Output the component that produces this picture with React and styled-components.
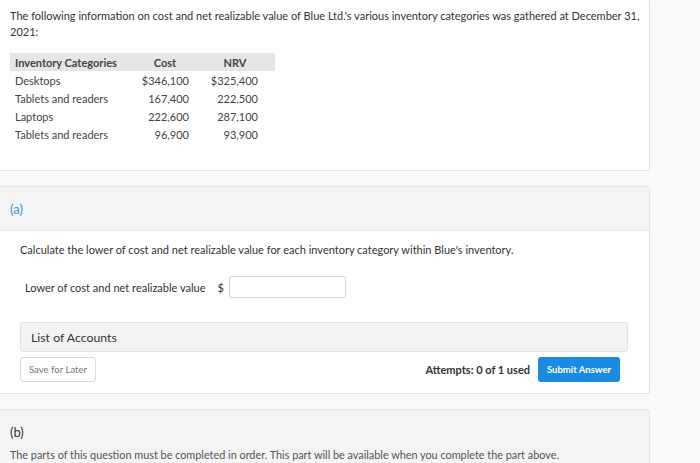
import React from 'react';
import styled, { createGlobalStyle } from 'styled-components';

const GlobalStyle = createGlobalStyle`
  html, body {
    margin: 0;
    padding: 0;
    background: #fafafa;
    font-family: Lato, "Open Sans", sans-serif;
    color: #333;
  }
`;

const Page = styled.div`
  width: 650px;
  display: flex;
  flex-direction: column;
  gap: 15px;
  margin-top: -2px;
`;

const Card = styled.div`
  background: ${props => props.$gray ? '#f4f4f4' : '#fff'};
  border: 1px solid #e4e4e4;
  border-left: none;
  border-radius: 0 3px 3px 0;
  overflow: hidden;
`;

const Intro = styled.div`
  padding: 9px 4px 27px 10px;
`;

const Para = styled.p`
  margin: 0;
  font-size: 11px;
  line-height: 16px;
  color: #333;
`;

const Table = styled.table`
  border-collapse: collapse;
  margin-top: 13px;
  font-size: 11px;
  color: #444;
`;

const HeadCell = styled.th`
  background: #e6e6e6;
  font-weight: 700;
  height: 18px;
  padding: 0 5px;
  text-align: ${props => props.$align || 'center'};
  color: #444;
`;

const Cell = styled.td`
  height: 18px;
  padding: 0 ${props => props.$pr || '5px'} 0 5px;
  text-align: ${props => props.$align || 'right'};
  width: ${props => props.$w || 'auto'};
  box-sizing: border-box;
`;

const PartHeader = styled.div`
  background: #f4f4f4;
  border-bottom: 1px solid #e8e8e8;
  height: 43px;
  display: flex;
  align-items: center;
  padding-left: 10px;
  font-size: 13px;
  color: ${props => props.$active ? '#3b93d0' : '#333'};
`;

const PartBody = styled.div`
  padding: 12px 20px 11px 20px;
  display: flex;
  flex-direction: column;
`;

const Question = styled.p`
  margin: 0;
  font-size: 11px;
  line-height: 14px;
  color: #333;
`;

const AnswerRow = styled.div`
  display: flex;
  align-items: center;
  margin: 19px 0 0 5px;
  font-size: 11px;
  color: #333;
`;

const Dollar = styled.span`
  margin: 0 5px 0 12px;
`;

const Input = styled.input`
  width: 115px;
  height: 20px;
  border: 1px solid #d8d8d8;
  border-radius: 2px;
  padding: 0;
  box-sizing: content-box;
`;

const Accounts = styled.div`
  margin: 24px 0 0 0;
  height: 28px;
  display: flex;
  align-items: center;
  padding-left: 10px;
  width: 596px;
  background: #f3f3f3;
  border: 1px solid #e2e2e2;
  border-radius: 3px;
  font-size: 12.3px;
  color: #333;
`;

const ActionRow = styled.div`
  display: flex;
  align-items: center;
  margin-top: 5px;
  width: 600px;
`;

const SaveButton = styled.button`
  width: 76px;
  height: 25px;
  background: #fff;
  border: 1px solid #dcdcdc;
  border-radius: 3px;
  font-family: inherit;
  font-size: 9.6px;
  color: #777;
  padding: 0;
`;

const Attempts = styled.span`
  margin-left: auto;
  font-size: 11px;
  font-weight: 700;
  color: #333;
`;

const SubmitButton = styled.button`
  margin-left: 8px;
  width: 82px;
  height: 25px;
  background: #1a8ae3;
  border: none;
  border-radius: 3px;
  font-family: inherit;
  font-size: 9.5px;
  font-weight: 700;
  color: #fff;
  padding: 0;
`;

const LockedBody = styled.div`
  padding: 13px 10px 0 10px;
  height: 60px;
`;

const PartLabel = styled.div`
  font-size: 13px;
  color: #333;
  line-height: 18px;
`;

const Notice = styled.p`
  margin: 7px 0 0 0;
  font-size: 10.85px;
  color: #555;
`;

const rows = [
  ['Desktops', '$346,100', '$325,400'],
  ['Tablets and readers', '167,400', '222,500'],
  ['Laptops', '222,600', '287,100'],
  ['Tablets and readers', '96,900', '93,900'],
];

export default function App() {
  return (
    <>
      <GlobalStyle />
      <Page>
        <Card>
          <Intro>
            <Para>
              The following information on cost and net realizable value of Blue Ltd.'s various inventory categories was gathered at December 31, 2021:
            </Para>
            <Table>
              <thead>
                <tr>
                  <HeadCell $align="left">Inventory Categories</HeadCell>
                  <HeadCell>Cost</HeadCell>
                  <HeadCell>NRV</HeadCell>
                </tr>
              </thead>
              <tbody>
                {rows.map((r, i) => (
                  <tr key={i}>
                    <Cell $align="left" $w="125px">{r[0]}</Cell>
                    <Cell $w="60px" $pr="6px">{r[1]}</Cell>
                    <Cell $w="80px" $pr="17px">{r[2]}</Cell>
                  </tr>
                ))}
              </tbody>
            </Table>
          </Intro>
        </Card>
        <Card>
          <PartHeader $active>(a)</PartHeader>
          <PartBody>
            <Question>
              Calculate the lower of cost and net realizable value for each inventory category within Blue's inventory.
            </Question>
            <AnswerRow>
              Lower of cost and net realizable value
              <Dollar>$</Dollar>
              <Input type="text" />
            </AnswerRow>
            <Accounts>List of Accounts</Accounts>
            <ActionRow>
              <SaveButton>Save for Later</SaveButton>
              <Attempts>Attempts: 0 of 1 used</Attempts>
              <SubmitButton>Submit Answer</SubmitButton>
            </ActionRow>
          </PartBody>
        </Card>
        <Card $gray>
          <LockedBody>
            <PartLabel>(b)</PartLabel>
            <Notice>
              The parts of this question must be completed in order. This part will be available when you complete the part above.
            </Notice>
          </LockedBody>
        </Card>
      </Page>
    </>
  );
}
